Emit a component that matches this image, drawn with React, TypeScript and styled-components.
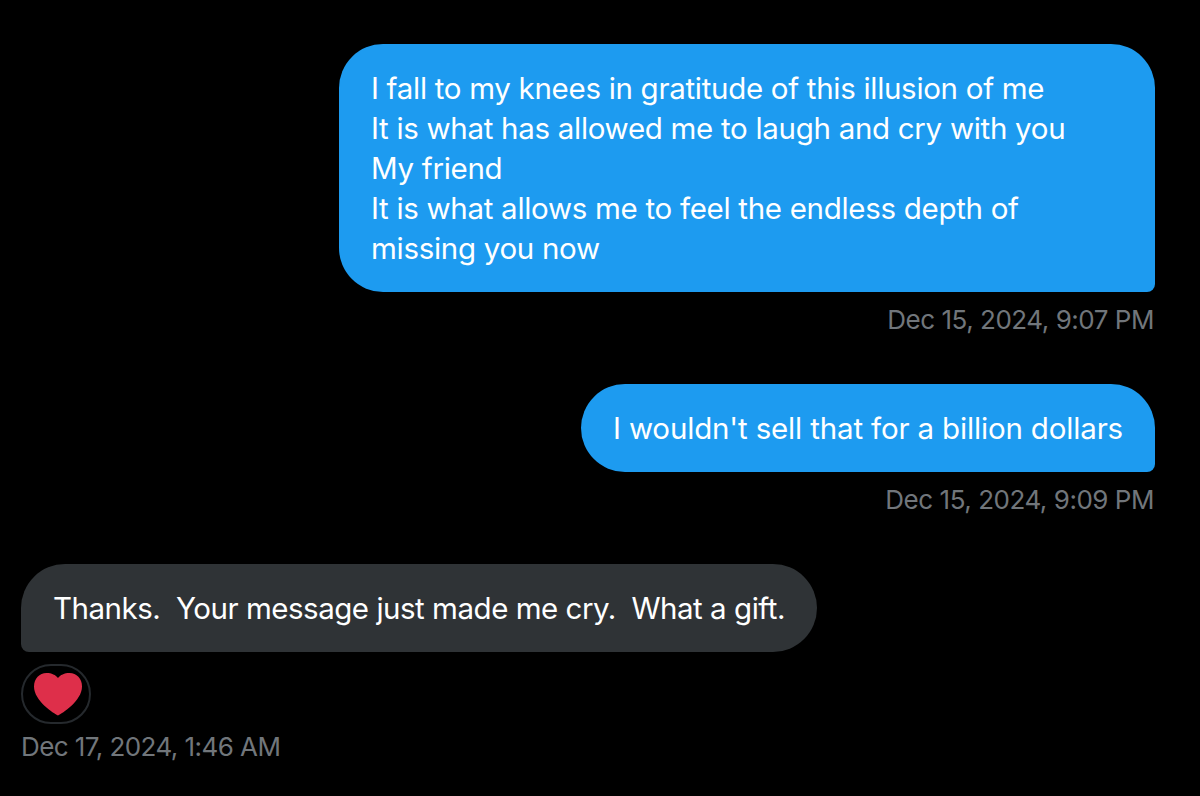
import { FC, ReactNode } from 'react'
import styled, { createGlobalStyle } from 'styled-components'

const GlobalStyle = createGlobalStyle`
  html, body {
    margin: 0;
    padding: 0;
    background: #000;
  }
`

type Side = 'sent' | 'received'

type MessageProps = {
  side: Side
  time: string
  tracking: number
  reaction?: boolean
  children: ReactNode
}

const HeartIcon: FC = () => (
  <svg width="48" height="43" viewBox="0 0 48 43" aria-hidden="true">
    <path
      d="M24 42.5C20 40.5 0 28 0 13.5 0 5.5 5.5 0 12.5 0 17.5 0 21.8 2 24 5 26.2 2 30.5 0 35.5 0 42.5 0 48 5.5 48 13.5 48 28 28 40.5 24 42.5Z"
      fill="#de2f4a"
    />
  </svg>
)

const Message: FC<MessageProps> = ({ side, time, tracking, reaction, children }) => (
  <Row $side={side}>
    <Bubble $side={side} $tracking={tracking}>
      {children}
    </Bubble>
    {reaction && (
      <Reaction>
        <HeartIcon />
      </Reaction>
    )}
    <Time>{time}</Time>
  </Row>
)

export default function App() {
  return (
    <>
      <GlobalStyle />
      <Page>
        <Message side="sent" time="Dec 15, 2024, 9:07 PM" tracking={-0.3}>
          I fall to my knees in gratitude of this illusion of me
          <br />
          It is what has allowed me to laugh and cry with you
          <br />
          My friend
          <br />
          It is what allows me to feel the endless depth of missing you now
        </Message>
        <Message side="sent" time="Dec 15, 2024, 9:09 PM" tracking={-0.16}>
          I wouldn't sell that for a billion dollars
        </Message>
        <Message side="received" time="Dec 17, 2024, 1:46 AM" tracking={-0.48} reaction>
          Thanks.&nbsp; Your message just made me cry.&nbsp; What a gift.
        </Message>
      </Page>
    </>
  )
}

const Page = styled.div`
  box-sizing: border-box;
  width: 1200px;
  height: 796px;
  overflow: hidden;
  padding: 44px 45px 0 21px;
  display: flex;
  flex-direction: column;
  gap: 44px;
  background: #000;
  font-family: Inter, 'Liberation Sans', sans-serif;
`

const Row = styled.div<{ $side: Side }>`
  display: flex;
  flex-direction: column;
  align-items: ${({ $side }) => ($side === 'sent' ? 'flex-end' : 'flex-start')};
`

const Bubble = styled.div<{ $side: Side; $tracking: number }>`
  box-sizing: border-box;
  max-width: 816px;
  padding: 24px 32px;
  font-size: 29.5px;
  line-height: 40px;
  letter-spacing: ${({ $tracking }) => $tracking}px;
  color: #fff;
  background: ${({ $side }) => ($side === 'sent' ? '#1d9bf0' : '#2f3336')};
  border-radius: ${({ $side }) => ($side === 'sent' ? '44px 44px 8px 44px' : '44px 44px 44px 8px')};
`

const Reaction = styled.div`
  box-sizing: border-box;
  width: 70px;
  height: 60px;
  margin-top: 12px;
  padding-left: 4px;
  display: flex;
  align-items: center;
  justify-content: center;
  border: 2px solid #25292d;
  border-radius: 30px;
`

const Time = styled.div`
  margin-top: 8px;
  padding-right: 1px;
  font-size: 26px;
  line-height: 40px;
  letter-spacing: -0.47px;
  color: #71767b;

  ${Reaction} + & {
    margin-top: 3px;
    letter-spacing: -0.56px;
  }
`
